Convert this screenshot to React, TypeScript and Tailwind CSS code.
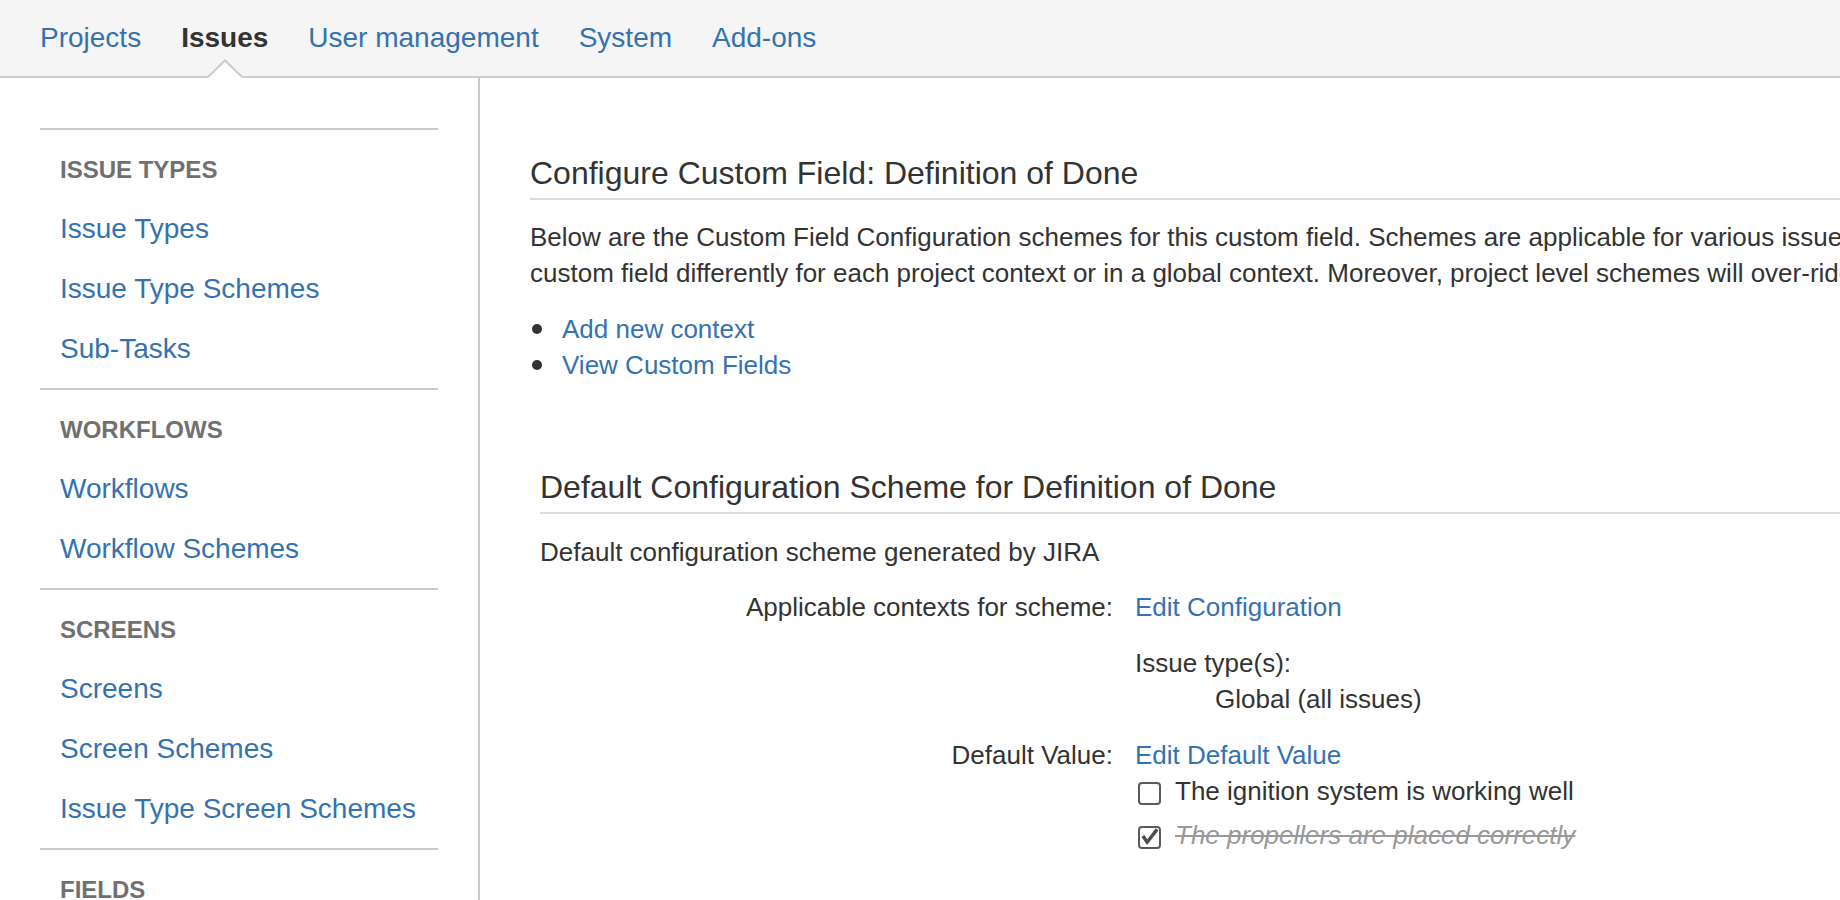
import React from "react";

const link = "text-[#3572b0]";

function Group({ title, items }: { title: string; items: string[] }) {
  return (
    <div className="border-t-2 border-[#ccc] pt-[19px] pb-[9px]">
      <h4 className="mb-[9px] px-[20px] text-[24px] leading-[41px] font-bold text-[#707070]">{title}</h4>
      <ul>
        {items.map((item) => (
          <li key={item} className={`h-[60px] px-[20px] text-[28px] leading-[59px] ${link}`}>
            {item}
          </li>
        ))}
      </ul>
    </div>
  );
}

function Box({ checked }: { checked?: boolean }) {
  return (
    <span className="mt-[4px] flex h-[23px] w-[23px] shrink-0 items-center justify-center rounded-[4px] border-[2.5px] border-[#5a5a5a] bg-white">
      {checked && (
        <svg width="18" height="18" viewBox="0 0 19 19" fill="none">
          <path d="M2 8.5 L6.5 15 L17 1.5" stroke="#4d4d4d" strokeWidth="3.6" />
        </svg>
      )}
    </span>
  );
}

export default function App() {
  return (
    <div
      className="h-[900px] w-[1840px] overflow-hidden bg-white text-[28px] text-[#333]"
      style={{ fontFamily: '"Liberation Sans", Arial, sans-serif' }}
    >
      <header className="relative h-[78px] border-b-2 border-[#ccc] bg-[#f5f5f5]">
        <nav className="flex gap-[40px] pl-[40px] text-[28px] leading-[76px]">
          <a className={link}>Projects</a>
          <a className="font-bold text-[#333]">Issues</a>
          <a className={link}>User management</a>
          <a className={link}>System</a>
          <a className={link}>Add-ons</a>
        </nav>
        <svg className="absolute top-[59px] left-[207px]" width="36" height="20" viewBox="0 0 36 20">
          <path d="M0 19 L2 18 L18 1.5 L34 18 L36 19 Z" fill="#fff" />
          <path d="M1 18 L18 1.5 L35 18" fill="none" stroke="#ccc" strokeWidth="2" />
        </svg>
      </header>
      <div className="flex h-[822px]">
        <aside className="w-[480px] shrink-0 border-r-2 border-[#ccc] pt-[50px] pr-[40px] pl-[40px]">
          <Group title="ISSUE TYPES" items={["Issue Types", "Issue Type Schemes", "Sub-Tasks"]} />
          <Group title="WORKFLOWS" items={["Workflows", "Workflow Schemes"]} />
          <Group title="SCREENS" items={["Screens", "Screen Schemes", "Issue Type Screen Schemes"]} />
          <Group title="FIELDS" items={[]} />
        </aside>
        <main className="min-w-0 flex-1 pt-[71px] pl-[50px]">
          <h2 className="border-b-2 border-[#ddd] pb-[1px] text-[32px] leading-[48px]">
            Configure Custom Field: Definition of Done
          </h2>
          <p className="mt-[19px] text-[26px] leading-[36px] whitespace-nowrap">
            Below are the Custom Field Configuration schemes for this custom field. Schemes are applicable for various issue types
            <br />
            custom field differently for each project context or in a global context. Moreover, project level schemes will over-ride
          </p>
          <ul className="mt-[20px] text-[26px] leading-[36px]">
            {["Add new context", "View Custom Fields"].map((t) => (
              <li key={t} className="flex items-center">
                <span className="ml-[2px] h-[10px] w-[10px] rounded-full bg-[#333]" />
                <a className={`ml-[20px] ${link}`}>{t}</a>
              </li>
            ))}
          </ul>
          <section className="mt-[80px] ml-[10px]">
            <h3 className="border-b-2 border-[#ddd] pb-[1px] text-[32px] leading-[48px]">
              Default Configuration Scheme for Definition of Done
            </h3>
            <p className="mt-[20px] text-[26px] leading-[36px]">Default configuration scheme generated by JIRA</p>
            <div className="mt-[19px] grid grid-cols-[573px_1fr] gap-x-[22px] text-[26px] leading-[36px]">
              <div className="text-right">Applicable contexts for scheme:</div>
              <div>
                <a className={link}>Edit Configuration</a>
                <div className="mt-[20px]">Issue type(s):</div>
                <div className="pl-[80px]">Global (all issues)</div>
              </div>
              <div className="mt-[20px] text-right">Default Value:</div>
              <div className="mt-[20px]">
                <a className={link}>Edit Default Value</a>
                <div className="flex h-[36px] items-center gap-[14px] pl-[3px]">
                  <Box />
                  <span>The ignition system is working well</span>
                </div>
                <div className="mt-[8px] flex h-[36px] items-center gap-[14px] pl-[3px]">
                  <Box checked />
                  <span className="text-[#999] italic line-through">The propellers are placed correctly</span>
                </div>
              </div>
            </div>
          </section>
        </main>
      </div>
    </div>
  );
}
